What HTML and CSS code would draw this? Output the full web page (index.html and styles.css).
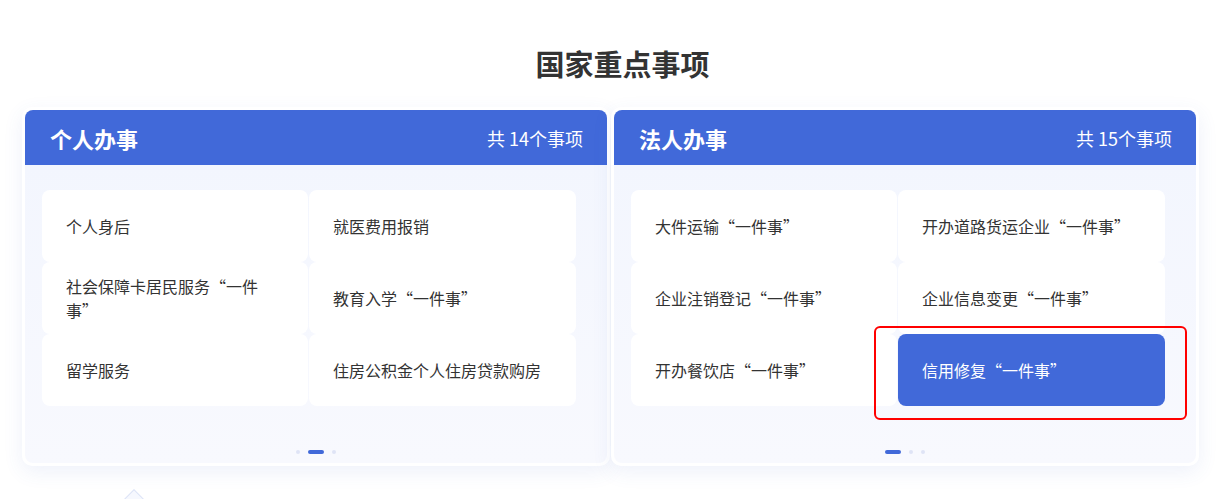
FILE: index.html
```html
<!DOCTYPE html>
<html lang="zh-CN">
	<head>
		<meta charset="UTF-8">
		<title>国家重点事项</title>
		<link rel="stylesheet" href="styles.css">
	</head>
	<body>
		<div id="outer">
			<h2 class="title">国家重点事项</h2>
			<div class="cards">
				<div class="card">
					<div class="card-head">
						<span class="card-name">个人办事</span>
						<span class="card-count">共 14个事项</span>
					</div>
					<div class="card-body">
						<div class="items">
							<div class="item">个人身后</div>
							<div class="item">就医费用报销</div>
							<div class="item">社会保障卡居民服务“一件事”</div>
							<div class="item">教育入学“一件事”</div>
							<div class="item">留学服务</div>
							<div class="item">住房公积金个人住房贷款购房</div>
						</div>
						<div class="dots">
							<span></span>
							<span class="on"></span>
							<span></span>
						</div>
					</div>
				</div>
				<div class="card">
					<div class="card-head">
						<span class="card-name">法人办事</span>
						<span class="card-count">共 15个事项</span>
					</div>
					<div class="card-body">
						<div class="items">
							<div class="item">大件运输“一件事”</div>
							<div class="item">开办道路货运企业“一件事”</div>
							<div class="item">企业注销登记“一件事”</div>
							<div class="item">企业信息变更“一件事”</div>
							<div class="item">开办餐饮店“一件事”</div>
							<div class="item active">信用修复“一件事”<i class="mark"></i></div>
						</div>
						<div class="dots">
							<span class="on"></span>
							<span></span>
							<span></span>
						</div>
					</div>
				</div>
			</div>
			<div class="pointer"></div>
		</div>
	</body>
</html>
```

FILE: styles.css
```css
*{
	margin: 0;
	padding: 0;
	box-sizing: border-box;
}
body{
	background: #fff;
	font-family: "Noto Sans CJK SC", "Noto Sans", sans-serif;
	color: #333;
}
#outer{
	width: 1229px;
	height: 499px;
	overflow: hidden;
	padding-top: 43px;
}
.title{
	height: 40px;
	line-height: 40px;
	font-size: 29px;
	font-weight: bold;
	color: #333;
	text-align: center;
	padding-left: 16px;
}
.cards{
	display: flex;
	gap: 1px;
	margin-top: 24px;
	padding-left: 22px;
}
.card{
	width: 588px;
	padding: 3px;
	background: #fff;
	border-radius: 10px;
	box-shadow: 0 6px 20px rgba(70, 95, 200, 0.09);
}
.card-head{
	height: 55px;
	padding: 0 24px 0 25px;
	display: flex;
	align-items: center;
	justify-content: space-between;
	background: #4169d9;
	border-radius: 8px 8px 0 0;
	color: #fff;
}
.card-name{
	font-size: 22px;
	font-weight: bold;
}
.card-count{
	font-size: 18px;
}
.card-body{
	height: 298px;
	padding: 25px 0 0 17px;
	background: linear-gradient(180deg, #f3f6fe 0%, #f8f9fe 100%);
	border-radius: 0 0 8px 8px;
}
.items{
	display: grid;
	grid-template-columns: 266px 267px;
	grid-auto-rows: 72px;
	column-gap: 1px;
}
.item{
	position: relative;
	display: flex;
	align-items: center;
	padding: 0 32px 0 24px;
	background: #fff;
	border-radius: 8px;
	font-size: 16px;
	line-height: 24px;
	color: #333;
}
.item.active{
	background: #4169d9;
	color: #fff;
}
.mark{
	position: absolute;
	left: -24px;
	right: -22px;
	top: -8px;
	bottom: -14px;
	border: 2px solid #f00;
	border-radius: 6px;
}
.dots{
	display: flex;
	justify-content: center;
	align-items: center;
	gap: 8px;
	margin-top: 44px;
	padding-right: 17px;
}
.dots span{
	width: 4px;
	height: 4px;
	border-radius: 2px;
	background: #dfe4f6;
}
.dots span.on{
	width: 16px;
	background: #4169d9;
}
.pointer{
	width: 14px;
	height: 14px;
	margin: 26px 0 0 127px;
	transform: rotate(45deg);
	border: 1px solid #dde3f6;
	background: #f6f8fe;
}
```
